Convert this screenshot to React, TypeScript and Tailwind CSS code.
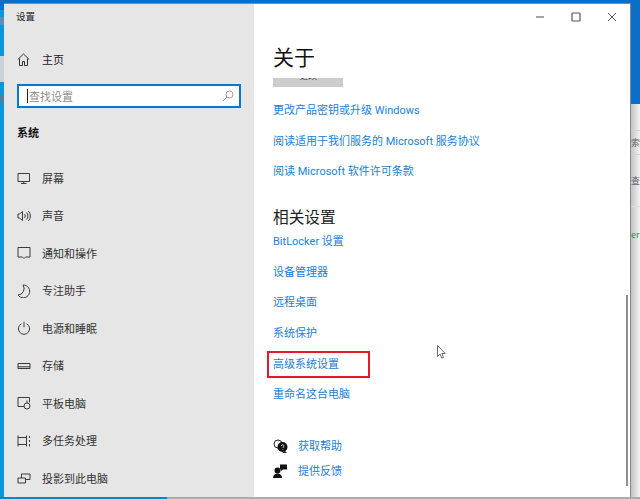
import React from "react";

const font = "[font-family:'Noto_Sans_CJK_SC','Liberation_Sans',sans-serif]";
const linkFont = "[font-family:Roboto,'Noto_Sans_CJK_SC',sans-serif]";

function Ico({ children }: { children: React.ReactNode }) {
  return (
    <svg width="14" height="14" viewBox="0 0 14 14" fill="none" stroke="#3a3a3a" strokeWidth="1" className="shrink-0">
      {children}
    </svg>
  );
}

const navItems: { label: string; icon: React.ReactNode }[] = [
  {
    label: "屏幕",
    icon: (
      <Ico>
        <path d="M1 2.5h11.5v8H1z M6.7 10.5v1.5 M4 12.5h5.5" />
      </Ico>
    ),
  },
  {
    label: "声音",
    icon: (
      <Ico>
        <path d="M1 5h1.5L5.5 2.5v9L2.5 9H1z M7.5 5.2a2.5 2.5 0 0 1 0 3.6 M9.5 3.5a5 5 0 0 1 0 7 M11.3 2a7 7 0 0 1 0 10" />
      </Ico>
    ),
  },
  {
    label: "通知和操作",
    icon: (
      <Ico>
        <path d="M1 1.5h12v9.5H8.5L7 12.5 5.5 11H1z" />
      </Ico>
    ),
  },
  {
    label: "专注助手",
    icon: (
      <Ico>
        <path d="M6 1A6.4 6.4 0 1 1 1 11 6.4 6.4 0 0 0 6 1z" />
      </Ico>
    ),
  },
  {
    label: "电源和睡眠",
    icon: (
      <Ico>
        <path d="M4.3 2.8a5.6 5.6 0 1 0 5.4 0 M7 0.8v5.5" />
      </Ico>
    ),
  },
  {
    label: "存储",
    icon: (
      <Ico>
        <path d="M1 4.5h12v5H1z M1 7.8h12" />
      </Ico>
    ),
  },
  {
    label: "平板电脑",
    icon: (
      <Ico>
        <path d="M7 10.5H1v-9h11.5v5" />
        <circle cx="10" cy="10" r="3" />
        <path d="M10 7V4.5" />
      </Ico>
    ),
  },
  {
    label: "多任务处理",
    icon: (
      <Ico>
        <path d="M1 1.5v11 M9.5 1.5v11 M1 3.5h8.5v7H1 M12.5 2v2 M12.5 6v2 M12.5 10v2.5" />
      </Ico>
    ),
  },
  {
    label: "投影到此电脑",
    icon: (
      <Ico>
        <path d="M1 7h7.5v5H1z M4.5 7V3h8.5v5.5H8.5" />
      </Ico>
    ),
  },
];

const topLinks = [
  "更改产品密钥或升级 Windows",
  "阅读适用于我们服务的 Microsoft 服务协议",
  "阅读 Microsoft 软件许可条款",
];

const relatedLinks = ["BitLocker 设置", "设备管理器", "远程桌面", "系统保护", "高级系统设置", "重命名这台电脑"];

export default function App() {
  return (
    <div className={`relative w-[640px] h-[499px] overflow-hidden bg-[#0a6fcb] ${font}`}>
      {/* desktop left of the window */}
      <div className="absolute left-0 top-[10px] w-[4px] h-[489px] bg-[#0a96dc]" />
      <div className="absolute left-0 top-[56px] w-[4px] h-[26px] bg-[#c9d2d6]" />
      <div className="absolute left-0 top-[17px] w-[4px] h-[8px] bg-[#5f8fb0]" />
      <div className="absolute left-0 top-[95px] w-[4px] h-[8px] bg-[#4d7f9f]" />
      <div className="absolute left-0 top-[497px] w-[167px] h-[2px] bg-[#0a86c4]" />

      {/* app behind the window, right side */}
      <div className="absolute left-[631px] top-[104px] w-[9px] h-[395px] bg-gradient-to-r from-[#c4c4c4] to-[#f4f4f4] text-[9px] leading-none">
        <div className="absolute left-0 top-[26px] w-full h-px bg-[#d4d4d4]" />
        <div className="absolute left-0 top-[50px] w-full h-px bg-[#d4d4d4]" />
        <div className="absolute left-0 top-[102px] w-full h-px bg-[#cfe0f2]" />
        <span className="absolute left-0 top-[34px] text-[#666]">索</span>
        <span className="absolute left-0 top-[72px] text-[#666]">查</span>
        <span className="absolute left-0 top-[126px] text-[#2f8f3f]">er</span>
      </div>
      <div className="absolute left-[167px] top-[497px] w-[473px] h-[2px] bg-[#ababab]" />

      {/* settings window */}
      <div className="absolute left-[4px] top-[3px] w-[627px] h-[494px] flex border border-[#7d8a96] border-l-0 border-b-0 bg-white">
        <aside className="w-[250px] shrink-0 bg-[#e6e6e6] flex flex-col text-[#222]">
          <div className="h-[25px] pl-[12px] flex items-center text-[9.5px]">设置</div>
          <div className="mt-[19px] h-[24px] pl-[13px] flex items-center gap-[12px] text-[11px]">
            <svg width="13" height="13" viewBox="0 0 13 13" fill="none" stroke="#333" strokeWidth="1">
              <path d="M0.8 6.5 6.5 1l5.7 5.5 M2.5 5.5v7h3V8.5h2v4h3v-7" />
            </svg>
            <span>主页</span>
          </div>
          <div className="mt-[13px] mx-[13px] h-[24px] w-[224px] bg-white border-2 border-[#0078d7] flex items-center justify-between pl-[8px] pr-[5px]">
            <div className="flex items-center gap-px text-[11px] text-[#8d8d8d]">
              <span className="w-px h-[14px] bg-[#222]" />
              <span>查找设置</span>
            </div>
            <svg width="12" height="12" viewBox="0 0 12 12" fill="none" stroke="#999" strokeWidth="1">
              <circle cx="7.5" cy="4.5" r="3.5" />
              <path d="M5 7 1 11" />
            </svg>
          </div>
          <div className="mt-[15px] h-[20px] pl-[13px] flex items-center text-[11px] font-bold text-[#111]">系统</div>
          <nav className="mt-[17px] flex flex-col">
            {navItems.map((it) => (
              <div key={it.label} className="h-[37.5px] pl-[13px] flex items-center gap-[11px] text-[11px] text-[#333]">
                {it.icon}
                <span>{it.label}</span>
              </div>
            ))}
          </nav>
        </aside>

        <main className={`relative flex-1 flex flex-col text-[11px] text-[#1a80d8] ${linkFont}`}>
          <div className="h-[25px] flex justify-end items-center pr-[13px] gap-[26px]">
            <svg width="10" height="10" viewBox="0 0 10 10" stroke="#666" strokeWidth="1.2" fill="none">
              <path d="M1 5h8" />
            </svg>
            <svg width="10" height="10" viewBox="0 0 10 10" stroke="#555" strokeWidth="1.2" fill="none">
              <rect x="1" y="1" width="8" height="8" rx="0.5" />
            </svg>
            <svg width="10" height="10" viewBox="0 0 10 10" stroke="#555" strokeWidth="1" fill="none">
              <path d="M1 1l8 8M9 1l-8 8" />
            </svg>
          </div>
          <div className="pl-[19px] flex flex-col">
            <h1 className="mt-[14px] h-[30px] pt-[2px] flex items-center text-[21px] font-normal text-[#111]">关于</h1>
            <div className="mt-[5px] w-[70px] h-[9px] bg-[#cccccc] overflow-hidden flex justify-center items-start">
              <span className="text-[9px] leading-[9px] text-[#444] -translate-y-[6px]">更改</span>
            </div>
            <div className="mt-[13px] flex flex-col gap-[10.5px]">
              {topLinks.map((t) => (
                <a key={t} className="h-[20px] pt-[3px] flex items-center">
                  {t}
                </a>
              ))}
            </div>
            <h2 className="mt-[24px] h-[24px] pt-[2px] flex items-center text-[15.7px] font-normal text-[#222]">相关设置</h2>
            <div className="mt-[2px] flex flex-col gap-[10.6px]">
              {relatedLinks.map((t) => (
                <a key={t} className="relative h-[20px] pt-[3px] flex items-center">
                  {t}
                  {t === "高级系统设置" && (
                    <span className="absolute left-[-6px] top-[-2px] w-[103px] h-[27px] border-2 border-[#e8182c]" />
                  )}
                </a>
              ))}
            </div>
            <div className="mt-[32px] h-[20px] flex items-center gap-[10px]">
              <svg width="15" height="14" viewBox="0 0 15 14" className="shrink-0">
                <circle cx="5" cy="5" r="4" fill="none" stroke="#222" strokeWidth="1" />
                <circle cx="9.5" cy="8" r="5" fill="#111" />
                <path d="M12 12l2 2H9z" fill="#111" />
                <path d="M8.3 7a1.3 1.3 0 1 1 1.8 1.2v.8 M9.9 10.4v.6" stroke="#fff" strokeWidth="0.8" fill="none" />
              </svg>
              <a className="pt-[3px]">获取帮助</a>
            </div>
            <div className="mt-[5px] h-[20px] flex items-center gap-[11px]">
              <svg width="14" height="14" viewBox="0 0 14 14" fill="#111" className="shrink-0">
                <circle cx="4.5" cy="6.5" r="3" />
                <path d="M0 14c0-3 2-4.5 4.5-4.5S9 11 9 14z" />
                <path d="M7 0.5h7v5H10L8 7V5.5H7z" />
              </svg>
              <a className="pt-[3px]">提供反馈</a>
            </div>
          </div>
          {/* scrollbar thumb */}
          <div className="absolute left-[372px] top-[291px] w-[2px] h-[191px] bg-[#8f8f8f]" />
        </main>
      </div>

      {/* mouse pointer */}
      <svg className="absolute left-[437px] top-[345px]" width="9" height="14" viewBox="0 0 9 14" fill="#fff" stroke="#444" strokeWidth="0.8">
        <path d="M0.5 0.5v11l2.6-2.4 1.7 4 1.7-.7-1.7-3.9h3.4z" />
      </svg>
    </div>
  );
}
